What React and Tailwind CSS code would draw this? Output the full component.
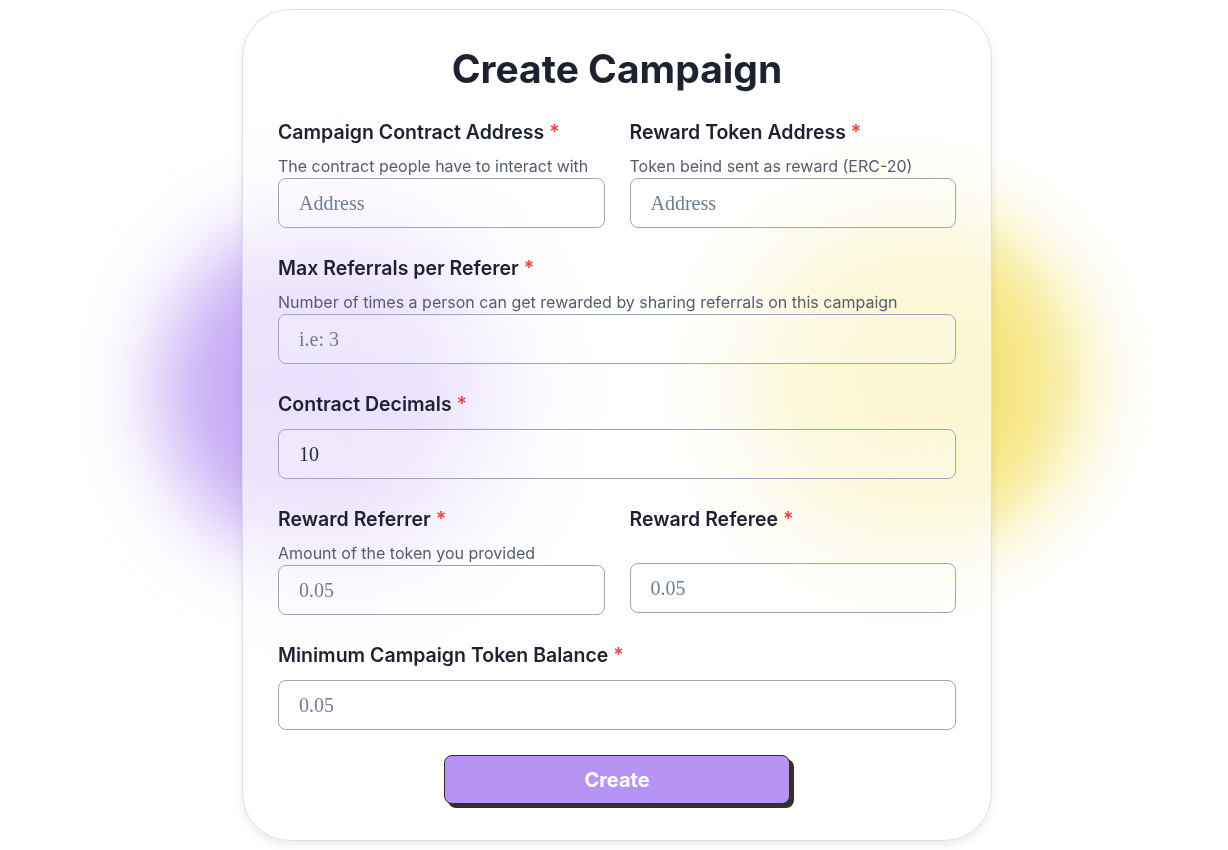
import { useState } from "react";

const font = { fontFamily: "Inter, 'Noto Sans', sans-serif" };

function Label({ children }) {
  return (
    <label className="block text-[19.5px] leading-6 font-semibold text-[#1e2230]">
      {children} <span className="text-[#ef4444]">*</span>
    </label>
  );
}

function Hint({ children }) {
  return <p className="mt-3 text-[16px] leading-5 text-[#555d6d]">{children}</p>;
}

function Input({ placeholder, value, onChange, className = "" }) {
  return (
    <input
      className={
        "block w-full h-[50px] rounded-lg border border-[#9aa6bb] bg-white/20 px-5 text-[20px] text-[#1f2937] placeholder:text-[#6e7c92] outline-none " +
        className
      }
      style={{ fontFamily: "'Liberation Serif', serif" }}
      placeholder={placeholder}
      value={value}
      onChange={onChange}
    />
  );
}

export default function App() {
  const [form, setForm] = useState({
    contract: "",
    token: "",
    maxRefs: "",
    decimals: "10",
    referrer: "",
    referee: "",
    minBalance: "",
  });

  const set = (key) => (e) => setForm({ ...form, [key]: e.target.value });

  return (
    <div className="relative min-h-[850px] w-full overflow-hidden bg-white" style={font}>
      {/* blurred blobs behind the card */}
      <div className="absolute left-[160px] top-[220px] h-[340px] w-[340px] rounded-full bg-[#c6aaf5] blur-[40px]" />
      <div className="absolute left-[740px] top-[210px] h-[340px] w-[340px] rounded-full bg-[#f5e680] blur-[40px]" />

      <div className="relative flex justify-center pt-[9px] pl-[6px]">
        <div className="w-[750px] rounded-[48px] border border-[#dcdcee] bg-white/65 backdrop-blur-2xl px-[35px] pt-[35px] pb-[36px] shadow-[0_4px_10px_rgba(0,0,0,0.08)]">
          <h1 className="text-center text-[39px] leading-[48px] font-bold text-[#1e2230]">
            Create Campaign
          </h1>

          <div className="mt-[27px] grid grid-cols-2 gap-x-[25px]">
            <div>
              <Label>Campaign Contract Address</Label>
              <Hint>The contract people have to interact with</Hint>
              <Input className="mt-0.5" placeholder="Address" value={form.contract} onChange={set("contract")} />
            </div>
            <div>
              <Label>Reward Token Address</Label>
              <Hint>Token beind sent as reward (ERC-20)</Hint>
              <Input className="mt-0.5" placeholder="Address" value={form.token} onChange={set("token")} />
            </div>
          </div>

          <div className="mt-7">
            <Label>Max Referrals per Referer</Label>
            <Hint>Number of times a person can get rewarded by sharing referrals on this campaign</Hint>
            <Input className="mt-0.5" placeholder="i.e: 3" value={form.maxRefs} onChange={set("maxRefs")} />
          </div>

          <div className="mt-7">
            <Label>Contract Decimals</Label>
            <Input className="mt-[13px]" placeholder="" value={form.decimals} onChange={set("decimals")} />
          </div>

          <div className="mt-7 grid grid-cols-2 gap-x-[25px]">
            <div>
              <Label>Reward Referrer</Label>
              <Hint>Amount of the token you provided</Hint>
              <Input className="mt-0.5" placeholder="0.05" value={form.referrer} onChange={set("referrer")} />
            </div>
            <div className="flex flex-col">
              <Label>Reward Referee</Label>
              <Input className="mt-[32px]" placeholder="0.05" value={form.referee} onChange={set("referee")} />
            </div>
          </div>

          <div className="mt-7">
            <Label>Minimum Campaign Token Balance</Label>
            <Input className="mt-[13px]" placeholder="0.05" value={form.minBalance} onChange={set("minBalance")} />
          </div>

          <div className="mt-[25px] flex justify-center">
            <button className="h-[49px] w-[346px] rounded-lg border border-[#2e2a27] bg-[#b794f4] text-[20px] font-bold text-white shadow-[4px_4px_0_#36302c]">
              Create
            </button>
          </div>
        </div>
      </div>
    </div>
  );
}
